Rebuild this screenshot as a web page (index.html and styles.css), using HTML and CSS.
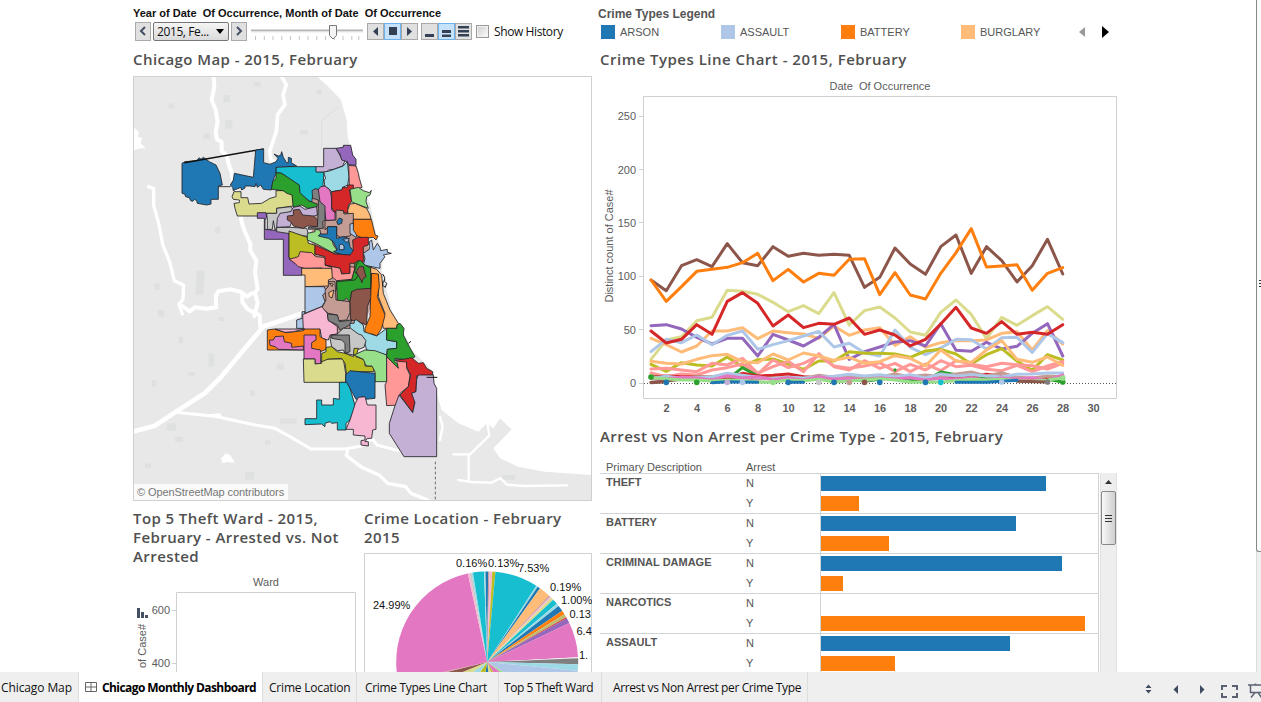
FILE: index.html
```html
<!DOCTYPE html>
<html lang="en">
<head>
<meta charset="utf-8">
<title>Chicago Monthly Dashboard</title>
<link rel="stylesheet" href="styles.css">
</head>
<body>
<div class="viewport">
<main class="dashboard">
  <section class="left">
    <div class="filter-label">Year of Date&nbsp; Of Occurrence, Month of Date&nbsp; Of Occurrence</div>
    <div class="controls">
      <button class="btn step"><svg width="8" height="10" viewBox="0 0 8 10"><path d="M6 1 2 5l4 4" fill="none" stroke="#465064" stroke-width="2"/></svg></button>
      <div class="select"><span>2015, Fe...</span><svg width="8" height="5"><path d="M0 0h8L4 5z"/></svg></div>
      <button class="btn step next"><svg width="8" height="10" viewBox="0 0 8 10"><path d="M2 1l4 4-4 4" fill="none" stroke="#465064" stroke-width="2"/></svg></button>
      <svg class="slider" width="114" height="20" viewBox="0 0 114 20">
        <path d="M1 9.500h112" stroke="#b5b5b5" stroke-width="2"/><path d="M1 11h112" stroke="#e8e8e8"/>
        <path d="M5.500 15v4m8.800-4v4m8.700-4v4m8.800-4v4m8.700-4v4m8.800-4v4m8.700-4v4m8.800-4v4m8.700-4v4m8.800-4v4m8.700-4v4m8.800-4v4m7-4v4" stroke="#c4c4c4"/>
        <path d="M79.500 4.500h7v10l-3.500 3.500-3.500-3.500z" fill="#f4f4f4" stroke="#777"/>
      </svg>
      <div class="group">
        <button class="btn"><svg width="15" height="14"><path d="M10 3v9L5 7.500z" fill="#344054"/></svg></button>
        <button class="btn on"><svg width="15" height="14"><path d="M4 3h8v8H4z" fill="#344054"/></svg></button>
        <button class="btn"><svg width="15" height="14"><path d="M5 3v9l5-4.500z" fill="#344054"/></svg></button>
      </div>
      <div class="group speed">
        <button class="btn"><svg width="15" height="14"><path d="M3 10h9v3H3z" fill="#344054"/></svg></button>
        <button class="btn on"><svg width="15" height="14"><path d="M3 6h9v3H3zM3 10.500h9v2.500H3z" fill="#344054"/></svg></button>
        <button class="btn"><svg width="15" height="14"><path d="M2 2h11v2.500H2zM2 6h11v2.500H2zM2 10h11v2.500H2z" fill="#344054"/></svg></button>
      </div>
      <i class="check"></i><span class="history">Show History</span>
    </div>
    <h2 class="title t-map">Chicago Map - 2015, February</h2>
    <div class="map">
      <svg width="459" height="425" viewBox="24 18 1377 1275">
        <path fill="#e8e8e8" d="M24 18H575L620 60 648 90 665 150 668 200 680 240 697 290 712 350 735 400 745 450 755 500 775 560 770 600 800 720 825 765 860 840 925 905 935 970 950 1020 1000 1060 1060 1085 1085 1060 1105 1075 1125 1045 1160 1078 1120 1120 1105 1135 1125 1165 1180 1190 1260 1205 1400 1215V1292H24Z"/>
        <g fill="#dfe1e0"><path d="M215 602h25l-6 72h-24zM295 75h20v22h-20zM300 150h22v26h-22zM385 36h22v14h-22zM235 190h20v18h-20zM525 180h24v14h-24zM130 100h18v16h-18zM88 640h16v20H88zM98 720h20v20H98zM250 850h18v40h-18zM160 800h14v20h-14zM80 930h14v22H80zM125 1060h28v22h-28zM150 1100h24v16h-24zM465 1045h50v16h-50zM360 1205h28v24h-28zM280 740h18v14h-18zM190 905h20v12h-20zM455 880h22v20h-22zM1130 1215h40v15h-40zM375 960h14v18h-14zM420 1110h16v14h-16zM575 60h16v14h-16zM60 1180h18v14H60zM270 470h16v20h-16z"/></g>
        <path d="M590 240v-90l55-42" fill="none" stroke="#dcdedd" stroke-width="3"/>
        <g fill="none" stroke="#fff" stroke-linejoin="round" stroke-linecap="round">
          <path stroke-width="12" d="M266 20l2 30-8 40 12 30 6 36-6 30 4 22 14 8 0 28 14 10 8 32 8 20 4 30 20 60 6 60 10 30 16 36 0 20 18 30-4 35 8 50-8 12 8 30-10 40"/>
          <path stroke-width="12" d="M380 670l-14 10-18-14-30-8-38 6-8 14 2 34-30 4-34-4-16 12-22-16"/>
          <path stroke-width="12" d="M352 672l0 24 16 22 36 18 2 34"/>
          <path stroke-width="11" d="M470 20l14 24-10 30 6 30-22 30-4 50-20 60 4 26 20 10"/>
          <path stroke-width="10" d="M70 350l16 6 0 50 14 50 14 70 20 50 14 56 28 14-2 42-12 14 10 30"/>
          <path stroke-width="14" d="M24 1085l66-18 60-40 90-58 50-50 60-72 66-78 60-20 70-24"/>
          <path stroke-width="9" d="M150 1027l120 12 110 24 70 12 50 28 58 34h100l48-8 36-22 14 18 60 16 30 4"/>
          <path stroke-width="10" d="M668 1140l-4 16 46 36 54 24 24 24 54 10 16 20 50 20"/>
          <path stroke-width="7" d="M985 1153h46v80m0-76l62-60-6-36M1000 1230l40 6 60 2 26-14 20 20 50 4 130-2M945 1040l8 30-8 40"/>
        </g>
        <path fill="#fff" d="M24 170l18 16-4 14 14 4-6 14 16 16-22 2-16 6zM288 1166l14-16 14 6 14 22-22-2-16 4zM225 1034l60-4 10 14z"/>
        <path d="M931 1175v115" stroke="#666" stroke-width="3" stroke-dasharray="8 7"/>
        <g stroke="#26262b" stroke-width="2.600" stroke-linejoin="round">
          <path fill="#c49c94" stroke="none" d="M560 360L690 420 740 560 720 600 740 700 700 820 620 830 600 700 560 560Z"/>
          <path fill="#17becf" d="M453 290H574V305L597 306 594 345 600 355 575 360 563 375 560 398 522 370 523 348 470 310 453 308Z"/>
          <g transform="translate(135 180)">
            <path fill="#1f77b4" d="M36 100L45 95 80 92 88 83 93 88 100 82 108 88 118 95 138 105 150 130 157 165 145 168V208H123V222L110 225 82 220 80 212 74 208 68 214 62 212 58 203 47 200 44 192 36 190Z"/>
            <path fill="none" stroke="#111" stroke-width="4.500" d="M43 98L281 57"/><path fill="none" d="M145 170H182"/>
            <path fill="#1f77b4" d="M181 165L190 150 193 130 250 142 257 60 281 57V98L300 103 318 95 324 85 312 72 325 78 332 76 335 65 340 82 350 98 355 98 355 82 364 85V98L380 108 318 112V130L310 150 304 180 280 178 272 165 262 172 258 160 255 170 240 168 225 168 225 174 215 180 212 172 190 182 188 172Z"/>
            <path fill="#dbdb8d" d="M192 185L213 185V203H233L237 222 275 220 300 205 318 200V182L340 182 368 195 370 228 320 235V250H290L262 258H202L195 235 192 220 208 218V210L190 208 186 200Z"/>
            <path fill="#2ca02c" d="M318 128L335 130 388 165 390 188 415 212 442 222 440 232 412 235 395 225 370 232 366 195 350 190 340 182 304 178 308 155 318 145Z"/>
            <path fill="#9467bd" d="M262 248H288L290 262 285 270 285 298 345 305 357 305V385L395 412V436H340V328H283V265H262Z"/>
            <path fill="#c7c7c7" d="M290 250L320 250V235L362 230 370 240 330 262 322 290 315 300 310 272 307 298 292 298V270Z"/>
            <path fill="#c7c7c7" d="M320 292H358L410 295 418 320 320 305Z"/>
            <path fill="#c5b0d5" d="M330 250L362 245 370 232 390 228 405 238 440 230 442 255 420 262 365 275 360 290 320 292 322 265Z"/>
            <path fill="#8c564b" d="M352 258L370 256V240L388 238 398 255 430 258 443 270 443 290 412 288 400 295 370 288 362 275 352 270Z"/>
            <path fill="#bcbd22" d="M357 303L412 322 415 340 435 345V378L415 372 398 375 395 385 362 390 357 380Z"/>
          </g>
          <path fill="#ff9896" d="M493 568L520 560 525 545 560 548 572 560 595 562 608 575 625 600 615 610 590 594 540 595 520 590 510 580Z"/>
          <g transform="translate(525 180)">
            <path fill="#c5b0d5" d="M71 55L108 55 125 85 135 92 128 108 100 118 85 120 80 126 48 126V110L71 110Z"/>
            <path fill="#9467bd" d="M108 55L130 52V46L152 46 158 75 168 88V106L145 104 142 95 125 90 120 72Z"/>
            <path fill="#9edae5" d="M71 126L85 124 130 108 142 95 147 140 143 165 128 172 128 180 95 185 85 175 75 172 72 150 77 146Z"/>
            <path fill="#ff9896" d="M146 106L168 108 175 130 178 145 186 172 160 180 148 165Z"/>
            <path fill="#e377c2" d="M50 185L62 170 75 168 90 180 95 205 95 240 105 248 105 271H78L72 230 58 215Z"/>
            <path fill="#d62728" d="M95 185L125 180 128 172 143 172V165L160 165 160 175 148 180 155 215 145 225 143 250 135 248 118 242 105 248 95 232Z"/>
            <path fill="#98df8a" d="M150 178L175 172 190 182 208 188 214 181 210 195 200 200 198 215 205 235 165 220 155 215Z"/>
            <path fill="#ffbb78" d="M150 222L165 220 200 235 210 255 213 268H160L145 258 143 240Z"/>
            <path fill="#7f7f7f" d="M36 182L45 176 55 178 60 215 75 228 75 270 68 275 70 295 25 298 25 292 52 290 55 235 55 210 38 205Z"/>
            <path fill="#c49c94" d="M75 272L108 270 108 240 130 242 132 252 160 250V300L150 318 120 322 110 315 110 290 85 290 75 300Z"/>
            <path fill="#1f77b4" d="M110 275L118 264 127 268 125 280 114 284Z"/>
            <path fill="#aec7e8" d="M150 282L160 280 164 300 172 312 168 322 150 310Z"/>
            <path fill="#ff7f0e" d="M160 268H214L222 300 226 316 234 318 228 330 220 322 190 325 172 318 160 300Z"/>
            <path fill="#98df8a" d="M22 310L45 305 45 298 60 300 62 312 95 325 100 345 118 370 105 372 50 342 22 330Z"/>
            <path fill="#1f77b4" d="M82 290H110V325L130 320 145 325 150 350 160 362 155 375 130 375 100 365 112 360 100 335 85 325 55 318 60 312 82 312Z"/>
            <path fill="#aec7e8" d="M128 328L148 325 142 338ZM118 345l8 -3 6 6v11h-14Z"/>
            <path fill="#d62728" d="M45 345L105 372 150 375 160 362 158 330 175 322 205 322 205 345 190 350 190 395 170 400 150 400 150 432 125 430 120 415 75 405 75 380 45 372Z"/>
            <path fill="#2ca02c" d="M165 398L175 392 190 405 215 407V480H110V450L155 448 160 430Z"/>
            <path fill="#ff9896" d="M75 405L120 415 125 432 150 430 150 410 165 412 160 430 155 448 110 452 95 440V412Z"/>
            <path fill="#aec7e8" d="M190 370L208 358 208 335 215 330 220 360 232 340 240 352 242 362 262 358 262 367 274 370 250 375 255 380 240 400V415L190 405 195 385Z"/>
          </g>
          <g transform="translate(375 570)">
            <path fill="#ffbb78" d="M155 25H245L247 55 235 60 238 78 165 80V45H155Z"/>
            <path fill="#aec7e8" d="M165 80L222 80 230 95 218 105 225 125 215 140 165 160ZM156 155L165 155 165 205 140 205V180L156 175Z"/>
            <path fill="#2ca02c" d="M260 65L315 60 325 45 313 35 320 12 330 0 345 15 362 25V85L340 88 305 95 300 125 290 115 276 125 262 122Z"/>
            <path fill="#8c564b" d="M318 35L328 20 340 20 348 50 338 58 336 68 330 55Z"/>
            <path fill="#c49c94" d="M225 90L235 80 235 65 255 65 258 120 300 125V158L290 180 265 182 262 165 235 160 215 145 228 120Z"/>
            <path fill="#ffbb78" d="M236 98L252 90 246 114 238 110ZM238 70L250 72 246 80Z"/>
            <path fill="#8c564b" d="M305 95L320 88 362 85 364 110 352 140 350 195 325 185 302 180 300 125Z"/>
            <path fill="#ffbb78" d="M362 22L380 28 395 45 400 100 420 150 445 190 440 205 400 205 395 180 405 160 385 110 385 45 362 40Z"/>
            <path fill="#ff7f0e" d="M365 40L385 42 388 80 382 110 405 165 395 205 380 228 368 222 345 226 345 205 360 170 362 110Z"/>
            <path fill="#f7b6d2" d="M158 164L215 140 232 160 235 180 262 200 262 222 240 225 235 240 215 235 210 208 160 210Z"/>
            <path fill="#7f7f7f" d="M232 162L262 165 268 185 305 180 300 195 270 210 262 195 235 182Z"/>
            <path fill="#9edae5" d="M300 190L312 190 314 180 320 180 340 195 342 215 380 228 410 205V240L440 245V265L412 268 410 285 350 270 340 235 320 222 300 210Z"/>
            <path fill="#c7c7c7" d="M240 235L245 225 262 222 280 205 302 205 325 222 335 225 348 242 342 262 320 270 310 285 285 280 280 270 262 272 245 260Z"/>
            <path fill="#7f7f7f" d="M245 225L298 225 300 275 285 280 285 250 275 240 245 235Z"/>
            <path fill="#ff7f0e" d="M52 210L72 207 108 218 160 212 165 207H210V230L228 240V268L212 275 160 270H52Z"/>
            <path fill="#f7b6d2" d="M75 207L165 207 130 215 105 217Z"/>
            <path fill="#e377c2" d="M58 240L70 240 75 230 100 228 103 245 125 250V262L160 258V270L85 268 75 260 60 256Z"/>
            <path fill="#e377c2" d="M162 225H198V240L185 248V265L212 270V312H195V297H162Z"/>
            <path fill="#dbdb8d" d="M160 297H195V312L215 310V300L240 297 280 297 287 340V367H162Z"/>
            <path fill="#bcbd22" d="M215 280L228 275 228 262 245 260 262 275 285 280 310 290 312 265 325 265 318 290 345 300 345 318 370 318 372 335 300 335 290 345 285 310 275 295 235 297 215 305Z"/>
            <path fill="#98df8a" d="M312 285L345 270 375 272 410 285V365H375V335L366 318 350 318 345 310 340 298Z"/>
            <path fill="#1f77b4" d="M287 345L300 332 375 340V415L345 418 340 410 318 418 300 385 287 365Z"/>
            <path fill="#17becf" d="M268 367H290L300 385 316 440 300 480 288 490 288 510 262 510 262 488 245 490 240 485 225 490 225 500 215 492 165 494V476H200V420H215V435H250V415L268 418Z"/>
            <path fill="#f7b6d2" d="M316 430L325 412 345 410 352 435 378 435V508L368 510 365 535 352 535 345 545 355 545V558L333 555V542L345 540 345 528 310 525V508L288 508 300 480Z"/>
            <path fill="#2ca02c" d="M410 205L440 205 440 195 450 190 462 205 460 225 478 260 495 290 480 300 460 298 435 295 435 305 445 315 445 328 410 290 412 268 440 265 440 245 410 240Z"/>
            <path fill="#ff9896" d="M410 290L445 325 440 300 470 300 470 325 480 345 475 380 450 400 445 435 410 437 405 375 410 365Z"/>
            <path fill="#d62728" d="M435 300L460 298 485 293 505 310 520 308 530 325 548 335 548 345 500 348 498 395 485 400 495 420 488 458 450 405 475 380 482 345 470 320 470 306 445 304Z"/>
            <path fill="#c5b0d5" d="M435 437L447 405 488 458 495 428 485 400 498 395 500 358 505 345 550 345 552 370 560 385V590H462L418 520V490Z"/>
            <path fill="none" stroke="#111" stroke-width="3" d="M530 352H562M475 250l8-6M398 42l6 10 0 12 6 6-4 12-8-6 2-14"/>
          </g>
        </g>
      </svg>
      <span class="credit">© OpenStreetMap contributors</span>
    </div>
    <div class="bottom">
      <section class="theft">
        <h2 class="title wrap">Top 5 Theft Ward - 2015,<br>February - Arrested vs. Not<br>Arrested</h2>
        <svg class="txt ward" width="223" height="105" viewBox="133 567 223 105">
          <text x="266" y="586" text-anchor="middle">Ward</text>
          <path d="M176.500 672V592.500h179V672M172 610.500h4M172 663.500h4" fill="none" stroke="#d0d0d0"/>
          <path d="M137 608h3v10h-3zM141 612h3v6h-3zM145 615h3v3h-3z" fill="#465064"/>
          <text x="170" y="614" text-anchor="end">600</text><text x="170" y="667" text-anchor="end">400</text>
          <text transform="translate(146 624) rotate(-90)" text-anchor="end">of Case#</text>
        </svg>
      </section>
      <section class="location">
        <h2 class="title wrap">Crime Location - February<br>2015</h2>
        <svg class="txt pie" width="228" height="119" viewBox="364 553 228 119">
          <g id="slices"></g>
          <path d="M364.500 672V553.500h227V672" fill="none" stroke="#d0d0d0"/>
          <g class="pct"><text x="456" y="567">0.16%</text><text x="488" y="567">0.13%</text><text x="518" y="572">7.53%</text><text x="550" y="591">0.19%</text><text x="561" y="603.500">1.00%</text><text x="569.500" y="618">0.13</text><text x="576.500" y="635">6.4</text><text x="579" y="659">1.</text><text x="373" y="609">24.99%</text></g>
        </svg>
      </section>
    </div>
  </section>

  <section class="right">
    <div class="legend-title">Crime Types Legend</div>
    <div class="legend">
      <span><i class="sw blue"></i>ARSON</span><span><i class="sw pale"></i>ASSAULT</span><span><i class="sw orange"></i>BATTERY</span><span><i class="sw peach"></i>BURGLARY</span>
      <svg width="32" height="12"><path d="M7 1v10L1 6z" fill="#999"/><path d="M24 0v12l7-6z"/></svg>
    </div>
    <h2 class="title t-line">Crime Types Line Chart - 2015, February</h2>
    <svg class="txt linechart" width="520" height="344" viewBox="600 76 520 344">
      <text x="880" y="90" text-anchor="middle" xml:space="preserve">Date&#160; Of Occurrence</text>
      <path d="M643.500 96.500h473v302h-473z" fill="none" stroke="#d0d0d0"/>
      <path d="M644 383.500h472" stroke="#555" stroke-dasharray="1 2"/>
      <g id="axes"></g>
      <text transform="translate(612.500 246) rotate(-90)" text-anchor="middle" class="small">Distinct count of Case#</text>
      <g id="series" transform="translate(640 220) scale(.33333)" fill="none" stroke-width="9" stroke-linejoin="round" stroke-linecap="round"></g>
    </svg>
    <h2 class="title t-arrest">Arrest vs Non Arrest per Crime Type - 2015, February</h2>
    <div class="thead"><span>Primary Description</span><span>Arrest</span></div>
    <div class="tablewrap">
      <div class="table">
        <div class="row"><b>THEFT</b><div class="flag"><span>N</span><span>Y</span></div><div class="bars"><i style="width:225px"></i><i style="width:38px"></i></div></div>
        <div class="row"><b>BATTERY</b><div class="flag"><span>N</span><span>Y</span></div><div class="bars"><i style="width:195px"></i><i style="width:68px"></i></div></div>
        <div class="row"><b>CRIMINAL DAMAGE</b><div class="flag"><span>N</span><span>Y</span></div><div class="bars"><i style="width:241px"></i><i style="width:22px"></i></div></div>
        <div class="row"><b>NARCOTICS</b><div class="flag"><span>N</span><span>Y</span></div><div class="bars"><i style="width:0"></i><i style="width:264px"></i></div></div>
        <div class="row"><b>ASSAULT</b><div class="flag"><span>N</span><span>Y</span></div><div class="bars"><i style="width:189px"></i><i style="width:74px"></i></div></div>
      </div>
      <div class="scroll"><svg width="15" height="17"><path d="M4 11l3.500-4 3.500 4z" fill="#333"/></svg><div class="thumb"><u></u><u></u><u></u></div></div>
    </div>
  </section>
  <div class="pagescroll"><div class="pagethumb"><u></u><u></u><u></u></div></div>
</main>
<nav class="tabs">
  <span class="tab a">Chicago Map</span>
  <span class="tab active"><svg width="12" height="10"><path d="M.5.5h11v9H.5zM6 .5v9M.5 5h11" fill="none" stroke="#666"/></svg>Chicago Monthly Dashboard</span>
  <span class="tab c">Crime Location</span>
  <span class="tab d">Crime Types Line Chart</span>
  <span class="tab e">Top 5 Theft Ward</span>
  <span class="tab f">Arrest vs Non Arrest per Crime Type</span>
  <svg class="navicons" width="120" height="30" viewBox="1141 672.500 120 30">
    <g fill="#3f4a5f"><path d="M1145.500 688.500l3-3.500 3 3.500zM1145.500 690.500l3 3.500 3-3.500zM1178 685.500v9l-4.500-4.500zM1200 685.500v9l4.500-4.500z"/></g>
    <g fill="none" stroke="#5a6272" stroke-width="2"><path d="M1222 690.500v-4h5M1232 686.500h5v4M1237 693.500v4h-5M1227 697.500h-5v-4"/></g>
    <path d="M1248 685.500h13M1250.500 685v8h10.500M1255 693l-4 5M1258 693l3.500 5M1255.500 685v-1" fill="none" stroke="#5a6272" stroke-width="1.500"/>
  </svg>
</nav>
</div>
<script src="charts.js"></script>
</body>
</html>
```
FILE: styles.css
```css
* { box-sizing: border-box; }
body { margin: 0; background: #fff; font-family: "Liberation Sans", Arial, sans-serif; font-size: 11px; color: #555; overflow: hidden; }
svg { display: block; }
.viewport { width: 1261px; height: 702px; display: flex; flex-direction: column; overflow: hidden; }
.dashboard { height: 672px; display: flex; padding-left: 133px; overflow: hidden; }
.left { width: 459px; padding-top: 6px; flex: none; }
.right { width: 520px; margin-left: 8px; flex: none; }
.filter-label { height: 15px; line-height: 15px; font-weight: bold; color: #111; white-space: nowrap; }
.controls { height: 20px; display: flex; align-items: center; padding-left: 2px; }
.btn { display: flex; align-items: center; justify-content: center; width: 17px; height: 17px; padding: 0; border: 1px solid #aaa; background: #e0e0e0; }
.btn.on { background: #c6e2fb; border-color: #6db2ec; }
.step { width: 16px; height: 19px; }
.next { margin-left: 2px; }
.select { width: 76px; height: 19px; margin-left: 2px; padding: 0 4px 0 3px; border: 1px solid #777; border-radius: 2px; background: linear-gradient(#f5f5f5, #dadada); display: flex; align-items: center; justify-content: space-between; color: #111; font: 12px/17px "Open Sans", sans-serif; letter-spacing: -.4px; white-space: nowrap; }
.slider { margin-left: 3px; }
.group { display: flex; margin-left: 3px; }
.speed { margin-left: 3px; }
.check { width: 13px; height: 13px; margin-left: 4px; border: 1px solid #999; background: linear-gradient(135deg, #ccc, #fff); box-shadow: inset 0 0 0 1px #f2f2f2; }
.history { margin-left: 5px; padding-top: 2px; font: 12px/20px "Open Sans", sans-serif; letter-spacing: -.4px; color: #111; white-space: nowrap; }
.title { margin: 0; font: 600 15px/19px "Open Sans", "Noto Sans", sans-serif; letter-spacing: .43px; color: #505050; white-space: nowrap; }
.wrap { letter-spacing: .42px; }
.t-map { height: 35px; padding-top: 9px; }
.map { position: relative; width: 459px; height: 425px; border: 1px solid #d0d0d0; overflow: hidden; }
.map svg { margin: -1px; }
.credit { position: absolute; left: 0; bottom: 0; width: 154px; height: 16px; padding-left: 3px; line-height: 17px; letter-spacing: -.08px; background: #fafafa; color: #777; white-space: nowrap; }
.bottom { display: flex; gap: 8px; padding-top: 8px; }
.theft { width: 223px; }
.location { width: 228px; }
.ward { margin-top: 1px; }
.pie { margin-top: 6px; }
.txt text { font: 11px "Liberation Sans", Arial, sans-serif; fill: #5c5c5c; }
.txt .pct text { fill: #111; }
.txt #axes .day { font-weight: bold; }
.legend-title { height: 21px; padding-top: 7px; margin-left: -2px; line-height: 14px; font-size: 12px; font-weight: bold; }
.legend { height: 20px; display: flex; align-items: center; padding-left: 1px; padding-top: 2px; }
.legend span { width: 120px; display: flex; align-items: center; gap: 5px; flex: none; }
.legend svg { margin-left: -3px; }
.sw { width: 14px; height: 14px; }
.blue { background: #1f77b4; }
.pale { background: #aec7e8; }
.orange { background: #ff7f0e; }
.peach { background: #ffbb78; }
.t-line { height: 35px; padding-top: 9px; letter-spacing: .5px; }
.t-arrest { height: 41px; padding-top: 7px; }
.thead { display: flex; height: 12px; line-height: 13px; padding-left: 6px; }
.thead span:first-child { width: 140px; }
.tablewrap { display: flex; }
.table { width: 499px; border-right: 1px solid #d0d4d6; }
.row { display: flex; height: 40px; border-top: 1px solid #d0d4d6; }
.row b { width: 146px; padding-left: 6px; line-height: 17px; }
.flag { width: 74px; display: flex; flex-direction: column; }
.flag span { height: 20px; line-height: 19px; }
.bars { border-left: 1px solid #d0d4d6; padding-top: 2px; }
.bars i { display: block; height: 15px; margin-bottom: 5px; background: #1f77b4; }
.bars i + i { background: #ff7f0e; }
.scroll { width: 17px; height: 200px; margin-left: 1px; background: #eee; border: 1px solid #e2e2e2; border-width: 0 1px; }
.thumb { width: 15px; height: 54px; margin-top: 1px; border: 1px solid #888; border-radius: 2px; background: linear-gradient(90deg, #f8f8f8, #cfcfcf); display: flex; flex-direction: column; align-items: center; justify-content: center; gap: 2px; }
.thumb u, .pagethumb u { width: 7px; height: 1px; background: #333; }
.pagescroll { width: 5px; margin-left: auto; height: 672px; background: #f0f0f0; border-left: 1px solid #ddd; }
.pagethumb { height: 552px; border: 1px solid #888; border-width: 0 0 1px 1px; border-radius: 0 0 0 3px; background: #fafafa; display: flex; flex-direction: column; align-items: flex-end; justify-content: center; gap: 2px; padding-top: 16px; margin-left: -1px; }
.pagethumb u { width: 2px; }
.tabs { height: 30px; background: #efefef; display: flex; font: 12px/31px "Open Sans", sans-serif; letter-spacing: -.2px; color: #111; }
.tab { white-space: nowrap; border-right: 1px solid #dcdcdc; flex: none; }
.tab.a { width: 79px; padding-left: 1px; letter-spacing: -.1px; }
.tab.active { width: 184px; background: #fff; color: #000; font-weight: bold; display: flex; align-items: center; gap: 5px; padding-left: 6px; letter-spacing: -.58px; }
.tab.c { width: 94px; padding-left: 6px; }
.tab.d { width: 142px; padding-left: 8px; letter-spacing: -.33px; }
.tab.e { width: 103px; padding-left: 5px; letter-spacing: -.45px; }
.tab.f { width: 206px; padding-left: 11px; letter-spacing: -.38px; }
.navicons { margin-left: auto; }
```
FILE: charts.js
```js
const NS = 'http://www.w3.org/2000/svg';
function add(parent, tag, attrs, text) {
  const el = document.createElementNS(NS, tag);
  for (const k in attrs) el.setAttribute(k, attrs[k]);
  if (text !== undefined) el.textContent = text;
  parent.appendChild(el);
}

const axes = document.getElementById('axes');
for (let v = 0; v <= 250; v += 50) {
  const y = 383.3 - v * 1.069;
  add(axes, 'text', { x: 636, y: y + 4, 'text-anchor': 'end' }, v);
  add(axes, 'path', { d: `M639 ${Math.floor(y) + .5}h4`, stroke: '#d0d0d0' });
}
for (let d = 2; d <= 30; d += 2) {
  add(axes, 'text', { x: 636 + 15.25 * d, y: 412, 'text-anchor': 'middle', class: 'day' }, d);
}

// Vertical positions per day; the zero line sits at 490.
const lines = [
  ['#dbdb8d', [418,360,350,302,292,211,214,223,247,275,257,281,218,315,272,261,294,336,346,277,240,283,356,292,316,287,260,298]],
  ['#ffbb78', [355,374,396,378,333,333,323,356,333,338,342,355,318,346,330,323,376,350,382,368,362,362,360,340,335,390,332,372]],
  ['#9467bd', [317,314,327,352,372,355,355,408,343,360,378,352,313,418,395,381,366,362,378,311,391,394,367,387,379,340,311,408]],
  ['#aec7e8', [395,358,368,345,374,346,333,388,374,362,348,334,381,370,398,408,330,382,404,384,358,359,387,353,352,397,341,368]],
  ['#d62728', [333,369,358,314,343,244,218,250,318,285,323,310,313,294,343,330,345,378,358,312,262,324,340,305,343,337,343,314]],
  ['#8c564b', [180,212,137,119,140,71,128,137,80,109,100,106,103,106,202,172,84,132,163,80,45,160,80,122,186,137,58,162]],
  ['#ff7f0e', [180,244,200,154,148,142,128,100,182,148,186,160,166,118,116,224,158,225,237,160,98,26,141,138,134,211,160,143]],
  ['#bcbd22', [433,454,428,435,438,411,440,419,417,432,448,423,423,395,400,400,402,412,393,388,402,432,404,386,423,451,404,420]],
  ['#ff9896', [447,445,450,455,430,435,415,460,440,424,455,401,440,450,422,445,430,455,432,452,422,433,440,430,434,437,447,430]],
  ['#ff9896', [459,470,462,465,450,443,432,462,420,443,430,407,438,445,438,428,455,433,450,422,440,436,448,452,436,455,438,424]],
  ['#ffbb78', [424,430,432,418,407,403,425,428,402,420,399,408,421,412,430,425,407,415,438,390,423,427,390,362,418,427,411,436]],
  ['#8c564b', [487,483,478,472,471,474,472,475,474,476,472,473,475,470,473,476,470,470,468,475,474,470,478,472,474,476,480,468]],
  ['#2ca02c', [470,472,478,470,476,478,443,468,477,480,477,474,479,473,484,478,472,478,482,456,464,474,475,476,480,484,478,486]],
  ['#d62728', [472,468,470,471,472,474,460,468,466,462,470,473,472,474,470,468,474,472,474,470,472,470,463,468,475,477,474,468]],
  ['#c49c94', [475,473,476,470,472,468,473,478,474,472,476,466,472,468,474,471,462,470,465,470,462,456,468,458,472,474,468,470]],
  ['#aec7e8', [475,469,475,474,470,460,466,472,476,472,474,472,469,463,468,464,470,464,474,462,468,464,468,470,463,462,459,459]],
  ['#e377c2', [474,476,472,474,480,467,474,470,479,473,480,470,478,475,482,474,476,473,480,475,478,474,480,474,477,473,482,465]],
  ['#98df8a', [473,476,480,480,484,480,482,486,487,480,482,478,486,483,480,476,480,487,486,486,482,478,480,478,482,484,480,474]]
];
const series = document.getElementById('series');
const px = d => 33 + 45.75 * (d - 1);
for (const [color, ys] of lines) {
  add(series, 'polyline', { stroke: color, points: ys.map((y, i) => px(i + 1) + ',' + y).join(' ') });
}
add(series, 'path', { stroke: '#8c564b', d: `M${px(1)} 488L${px(2)} 485M${px(25)} 484L${px(27)} 486` });
add(series, 'path', { stroke: '#1f77b4', d: `M${px(5)} 488L${px(6)} 485 ${px(8)} 487M${px(10)} 487H${px(11)}M${px(21)} 487H${px(23)}L${px(25)} 481` });
const dots = [[1,'#2ca02c',471],[2,'#1f77b4',487],[4,'#2ca02c',487],[6,'#c5b0d5',487],[7,'#aec7e8',487],[9,'#98df8a',487],[10,'#1f77b4',487],[12,'#c7c7c7',487],[13,'#1f77b4',487],[14,'#c49c94',487],[15,'#8c564b',487],[16,'#1f77b4',487],[19,'#1f77b4',487],[20,'#17becf',487],[24,'#aec7e8',486],[27,'#7f7f7f',486],[28,'#2ca02c',486],[28,'#98df8a',474]];
for (const [d, color, y] of dots) add(series, 'circle', { cx: px(d), cy: y, r: 8.5, fill: color, stroke: 'none' });
add(series, 'circle', { cx: px(17), cy: 450, r: 5, fill: '#2ca02c', stroke: 'none' });

// Slice boundaries in degrees, clockwise from the top.
const slices = [[-1.2,.6,'#1f77b4'],[.6,1.5,'#c49c94'],[1.5,3.2,'#f7b6d2'],[3.2,5.2,'#bcbd22'],[5.2,32.7,'#17becf'],[32.7,33.7,'#9edae5'],[33.7,35.5,'#1f77b4'],[35.5,42.7,'#ffbb78'],[42.7,43.7,'#c49c94'],[43.7,44.7,'#f7b6d2'],[44.7,46.5,'#dbdb8d'],[46.5,50,'#17becf'],[50,51.7,'#9edae5'],[51.7,55.5,'#1f77b4'],[55.5,58.2,'#ff7f0e'],[58.2,60.3,'#bcbd72'],[60.3,61.1,'#d62728'],[61.1,64.5,'#9467bd'],[64.5,87,'#e377c2'],[87,87.7,'#f2f2f2'],[87.7,91.5,'#7f7f7f'],[91.5,95.5,'#9edae5'],[95.5,122,'#aec7e8'],[122,128,'#98df8a'],[128,150,'#e377c2'],[150,160,'#bcbd22'],[160,174,'#dbdb8d'],[174,190,'#1f77b4'],[190,215,'#bcbd22'],[215,235,'#9edae5'],[235,247.7,'#dbdb8d'],[247.7,256,'#8c564b'],[256,257,'#c49c94'],[257,347.7,'#e377c2'],[347.7,348.9,'#f7b6d2'],[348.9,350,'#c7c7c7'],[350,351,'#9edae5'],[351,358,'#17becf'],[358,358.8,'#9edae5']];
const point = a => {
  const r = a * Math.PI / 180;
  return (487.2 + 91 * Math.sin(r)).toFixed(2) + ' ' + (662 - 90.5 * Math.cos(r)).toFixed(2);
};
for (const [a, b, color] of slices) {
  add(document.getElementById('slices'), 'path', { fill: color, d: `M487.2 662L${point(a)}A91 90.500 0 0 1 ${point(b)}Z` });
}
```
